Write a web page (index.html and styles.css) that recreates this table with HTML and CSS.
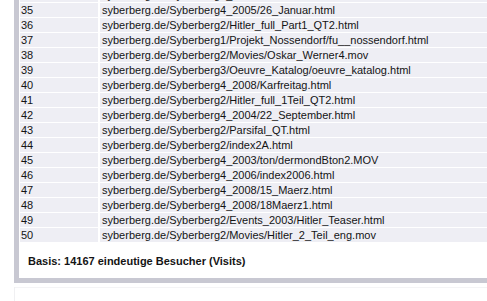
FILE: index.html
```html
<!DOCTYPE html>
<html>
<head>
<meta charset="utf-8">
<link rel="stylesheet" href="styles.css">
</head>
<body>
<div class="panel">
  <div class="rows">
    <div class="row"><div class="num">34</div><div class="url">syberberg.de/Syberberg4_2008/index2008.html</div></div>
    <div class="row"><div class="num">35</div><div class="url">syberberg.de/Syberberg4_2005/26_Januar.html</div></div>
    <div class="row"><div class="num">36</div><div class="url">syberberg.de/Syberberg2/Hitler_full_Part1_QT2.html</div></div>
    <div class="row"><div class="num">37</div><div class="url">syberberg.de/Syberberg1/Projekt_Nossendorf/fu__nossendorf.html</div></div>
    <div class="row"><div class="num">38</div><div class="url">syberberg.de/Syberberg2/Movies/Oskar_Werner4.mov</div></div>
    <div class="row"><div class="num">39</div><div class="url">syberberg.de/Syberberg3/Oeuvre_Katalog/oeuvre_katalog.html</div></div>
    <div class="row"><div class="num">40</div><div class="url">syberberg.de/Syberberg4_2008/Karfreitag.html</div></div>
    <div class="row"><div class="num">41</div><div class="url">syberberg.de/Syberberg2/Hitler_full_1Teil_QT2.html</div></div>
    <div class="row"><div class="num">42</div><div class="url">syberberg.de/Syberberg4_2004/22_September.html</div></div>
    <div class="row"><div class="num">43</div><div class="url">syberberg.de/Syberberg2/Parsifal_QT.html</div></div>
    <div class="row"><div class="num">44</div><div class="url">syberberg.de/Syberberg2/index2A.html</div></div>
    <div class="row"><div class="num">45</div><div class="url">syberberg.de/Syberberg4_2003/ton/dermondBton2.MOV</div></div>
    <div class="row"><div class="num">46</div><div class="url">syberberg.de/Syberberg4_2006/index2006.html</div></div>
    <div class="row"><div class="num">47</div><div class="url">syberberg.de/Syberberg4_2008/15_Maerz.html</div></div>
    <div class="row"><div class="num">48</div><div class="url">syberberg.de/Syberberg4_2008/18Maerz1.html</div></div>
    <div class="row"><div class="num">49</div><div class="url">syberberg.de/Syberberg2/Events_2003/Hitler_Teaser.html</div></div>
    <div class="row"><div class="num">50</div><div class="url">syberberg.de/Syberberg2/Movies/Hitler_2_Teil_eng.mov</div></div>
  </div>
  <div class="basis">Basis: 14167 eindeutige Besucher (Visits)</div>
</div>
<div class="below"></div>
</body>
</html>
```

FILE: styles.css
```css
html, body {
  margin: 0;
  padding: 0;
  background: #ffffff;
}
body {
  font-family: "Liberation Sans", Arial, sans-serif;
  font-size: 11px;
  color: #141414;
  overflow: hidden;
}
.panel {
  margin-top: -12px;
  margin-left: 14px;
  border-left: 5px solid #c8c8d2;
  border-bottom: 5px solid #c8c8d2;
  background: #ffffff;
}
.rows {
  display: flex;
  flex-direction: column;
  gap: 1px;
  padding-left: 1px;
}
.row {
  display: grid;
  grid-template-columns: 78px 1fr;
  column-gap: 2px;
  height: 14px;
  line-height: 14px;
}
.num, .url {
  background: #eeeef4;
  white-space: nowrap;
  overflow: hidden;
}
.num {
  padding-left: 1px;
}
.url {
  padding-left: 2px;
}
.basis {
  font-weight: bold;
  line-height: 14px;
  padding: 12px 0 10px 9px;
}
.below {
  margin-left: 14px;
  height: 20px;
  border-left: 1px solid #f0f0f2;
  position: relative;
}
.below::after {
  content: "";
  display: block;
  margin-top: 4px;
  height: 1px;
  background: #f4f4f6;
}
```
